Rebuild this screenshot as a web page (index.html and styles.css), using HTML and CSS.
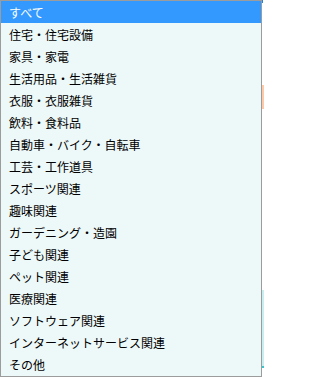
FILE: index.html
```html
<!DOCTYPE html>
<html lang="ja">
<head>
<meta charset="utf-8">
<link rel="stylesheet" href="styles.css">
</head>
<body>
<div class="page">
  <div class="bg-mark mark-blue"></div>
  <div class="bg-mark mark-orange"></div>
  <div class="bg-mark mark-teal"></div>
  <div class="bg-mark mark-teal-line"></div>
  <ul class="listbox">
    <li class="option selected">すべて</li>
    <li class="option">住宅・住宅設備</li>
    <li class="option">家具・家電</li>
    <li class="option">生活用品・生活雑貨</li>
    <li class="option">衣服・衣服雑貨</li>
    <li class="option">飲料・食料品</li>
    <li class="option">自動車・バイク・自転車</li>
    <li class="option">工芸・工作道具</li>
    <li class="option">スポーツ関連</li>
    <li class="option">趣味関連</li>
    <li class="option">ガーデニング・造園</li>
    <li class="option">子ども関連</li>
    <li class="option">ペット関連</li>
    <li class="option">医療関連</li>
    <li class="option">ソフトウェア関連</li>
    <li class="option">インターネットサービス関連</li>
    <li class="option">その他</li>
  </ul>
</div>
</body>
</html>
```
FILE: styles.css
```css
html, body {
  margin: 0;
  padding: 0;
  background: #ffffff;
}
.page {
  position: relative;
  width: 264px;
  height: 379px;
  overflow: hidden;
}
.listbox {
  list-style: none;
  margin: 0;
  padding: 0 0 1px 0;
  width: 260px;
  border: 1px solid #9c9c9c;
  background: #edf8f8;
  font-family: "Noto Sans CJK JP", "Noto Sans", sans-serif;
  font-size: 12px;
  color: #000000;
  position: relative;
  z-index: 1;
}
.option {
  height: 22px;
  line-height: 23px;
  padding-left: 8px;
  white-space: nowrap;
}
.option.selected {
  background: #3399ff;
  color: #ffffff;
}
.bg-mark {
  position: absolute;
}
.mark-blue {
  left: 262px;
  top: 0;
  width: 1px;
  height: 3px;
  background: #2f7fd0;
}
.mark-orange {
  left: 262px;
  top: 85px;
  width: 2px;
  height: 24px;
  background: #ffc9a8;
}
.mark-teal {
  left: 262px;
  top: 290px;
  width: 2px;
  height: 76px;
  background: #c9eef0;
}
.mark-teal-line {
  left: 0;
  top: 366px;
  width: 264px;
  height: 2px;
  background: #3cc4cc;
}
```
